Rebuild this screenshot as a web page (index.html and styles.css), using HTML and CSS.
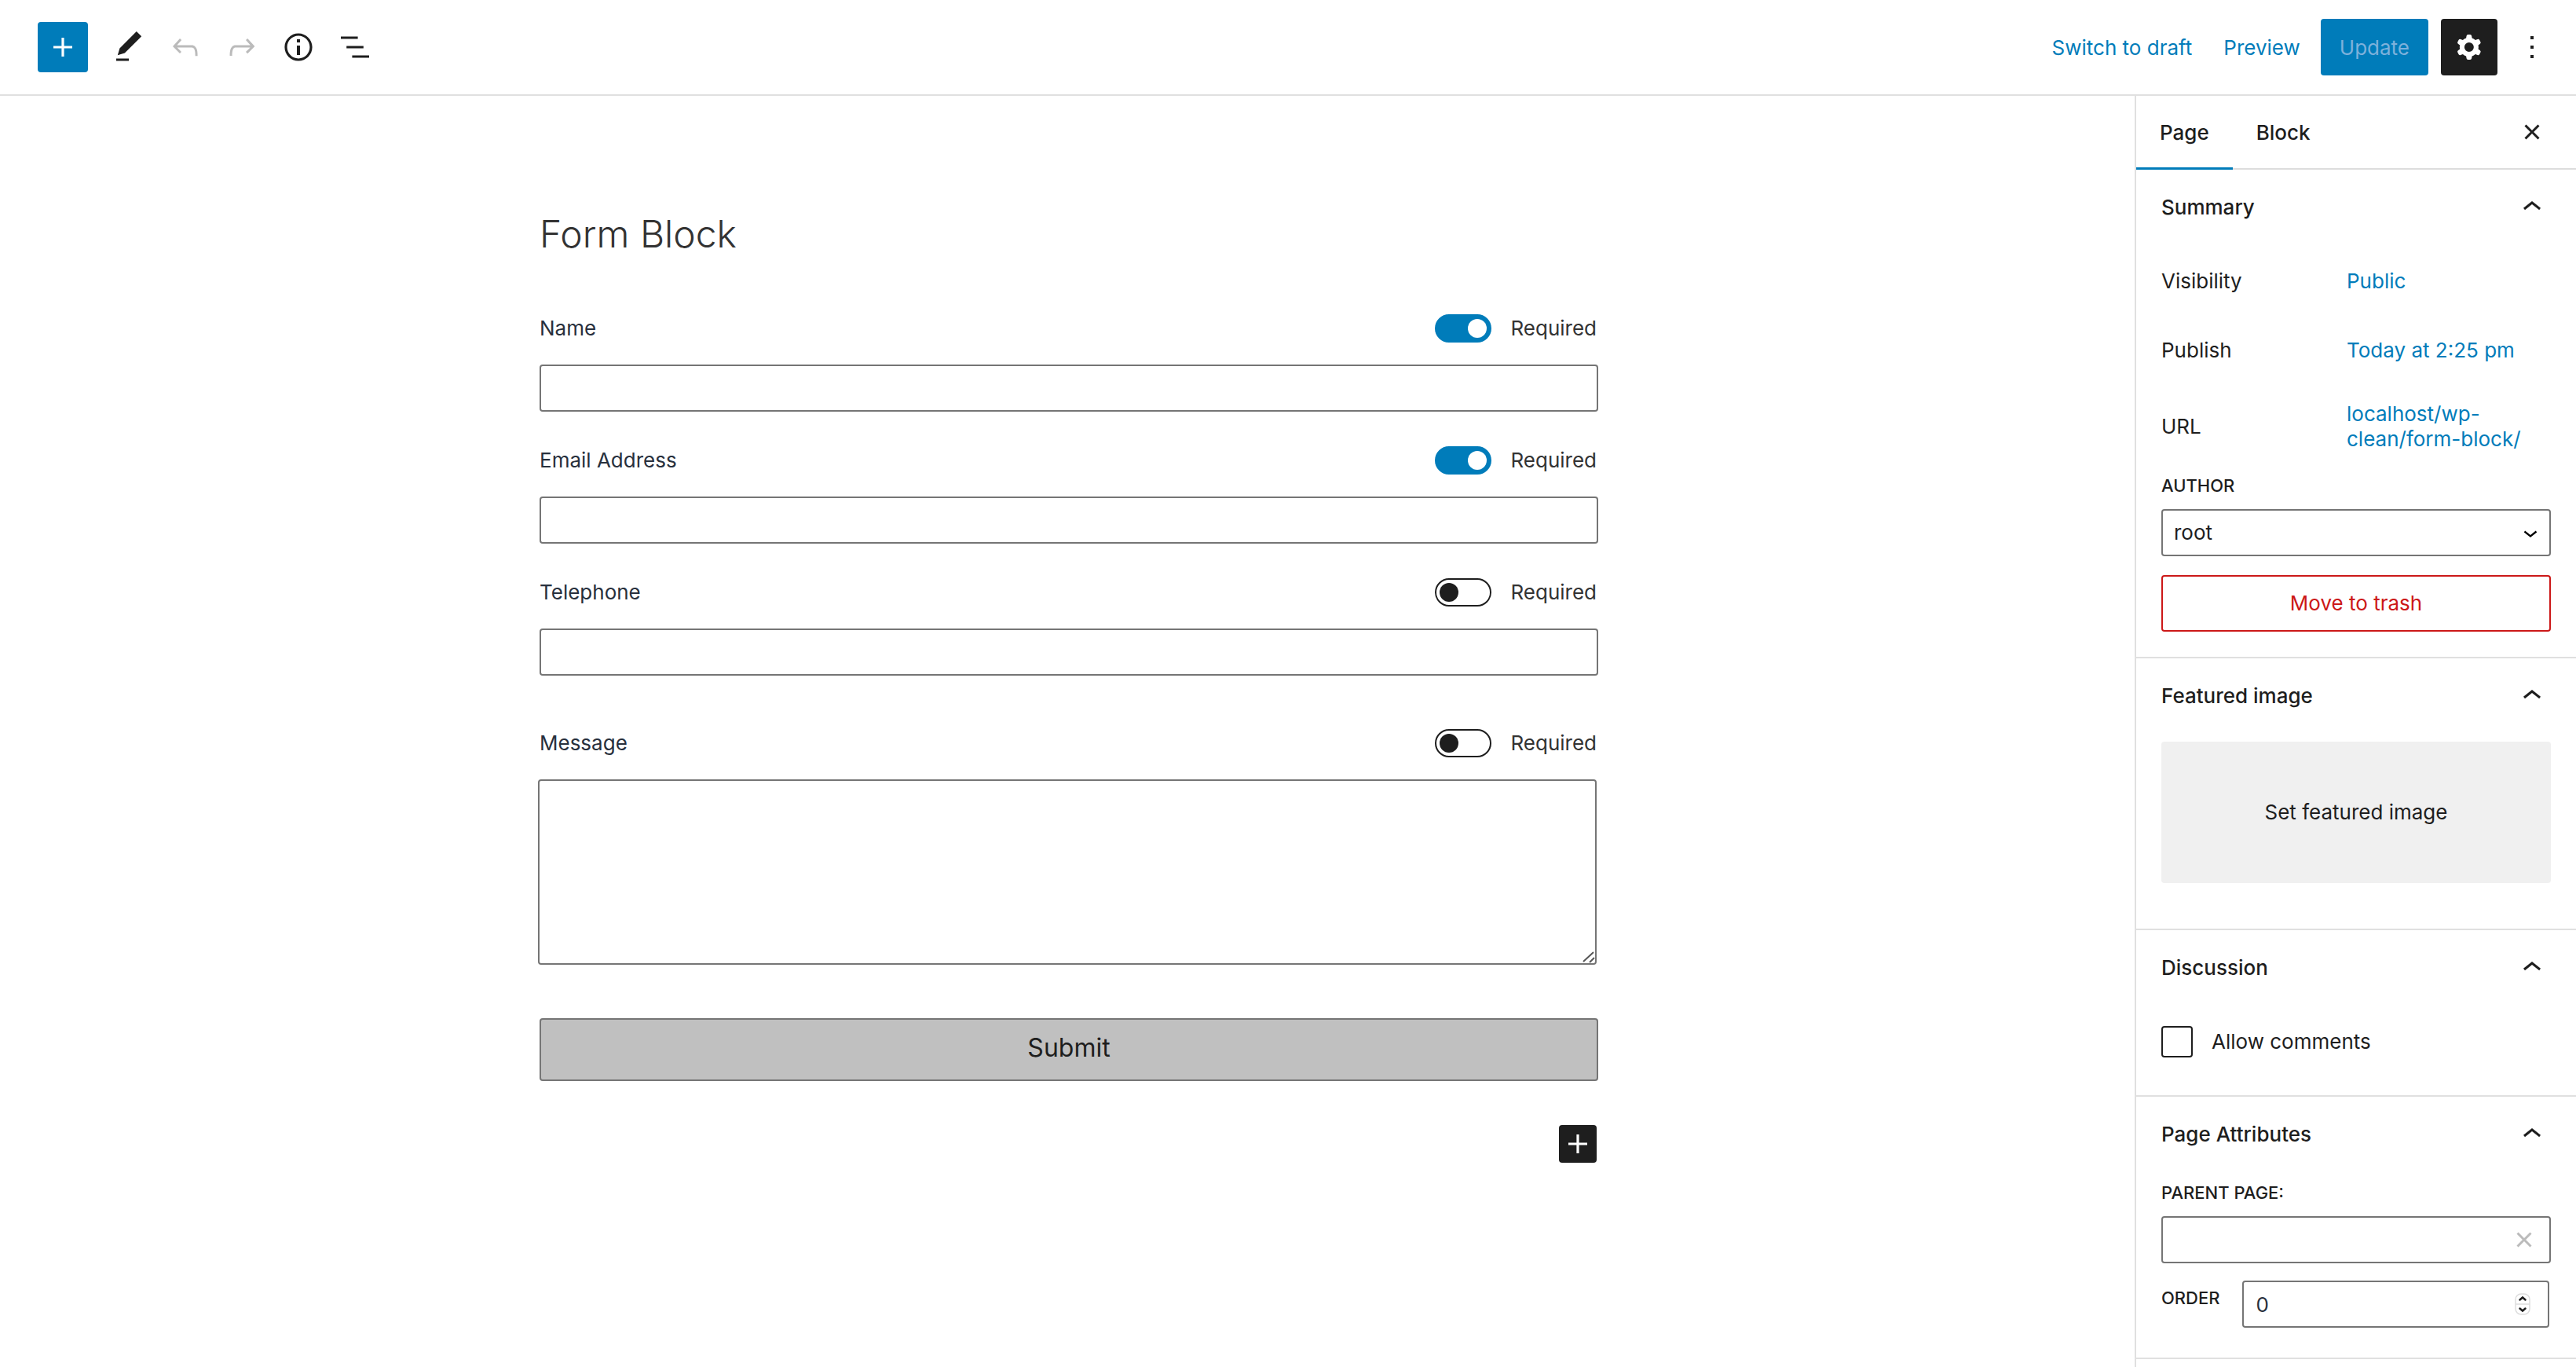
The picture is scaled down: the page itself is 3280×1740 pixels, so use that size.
FILE: index.html
```html
<!DOCTYPE html>
<html lang="en">
<head>
<meta charset="utf-8">
<title>Form Block</title>
<link rel="stylesheet" href="styles.css">
</head>
<body>
<header class="topbar">
  <div class="tools">
    <button class="inserter" type="button" aria-label="Toggle block inserter"><svg class="icon" viewBox="0 0 24 24"><path d="M18 11.2h-5.2V6h-1.6v5.2H6v1.6h5.2V18h1.6v-5.2H18z"/></svg></button>
    <button class="tool" type="button" aria-label="Tools"><svg class="icon" viewBox="0 0 24 24"><path d="M20.1 5.1L16.9 2 6.2 12.7l-1.3 4.4 4.5-1.3L20.1 5.1zM4 20.8h8v-1.5H4v1.5z"/></svg></button>
    <button class="tool" type="button" aria-label="Undo" disabled><svg class="icon" viewBox="0 0 24 24"><path d="M18.3 11.7c-.6-.6-1.4-.9-2.3-.9H6.7l2.9-3.3-1.1-1-4.5 5L8.5 16l1-1-2.7-2.7H16c.5 0 .9.2 1.3.5 1 1 1 3.4 1 4.5v.3h1.5v-.2c0-1.5 0-4.3-1.5-5.7z"/></svg></button>
    <button class="tool" type="button" aria-label="Redo" disabled><svg class="icon" viewBox="0 0 24 24"><path d="M15.6 6.5l-1.1 1 2.9 3.3H8c-.9 0-1.7.3-2.3.9-1.4 1.5-1.4 4.2-1.4 5.6v.2h1.5v-.3c0-1.1 0-3.5 1-4.5.3-.3.7-.5 1.3-.5h9.2L14.5 15l1.1 1.1 4.6-4.6-4.6-5z"/></svg></button>
    <button class="tool" type="button" aria-label="Details"><svg class="icon" viewBox="0 0 24 24"><path d="M12 3.2c-4.8 0-8.8 3.9-8.8 8.8 0 4.8 3.9 8.8 8.8 8.8 4.8 0 8.8-3.9 8.8-8.8 0-4.8-4-8.8-8.8-8.8zm0 16c-4 0-7.2-3.3-7.2-7.2C4.8 8 8 4.8 12 4.8s7.2 3.3 7.2 7.2c0 4-3.2 7.2-7.2 7.2zM11 17h2v-6h-2v6zm0-8h2V7h-2v2z"/></svg></button>
    <button class="tool" type="button" aria-label="List view"><svg class="icon" viewBox="0 0 24 24"><path d="M13.8 5.2H3v1.5h10.8V5.2zm-3.6 12v1.5H21v-1.5H10.2zm7.2-6H6.6v1.5h10.8v-1.5z"/></svg></button>
  </div>
  <div class="actions">
    <button class="text-button" type="button">Switch to draft</button>
    <button class="text-button" type="button">Preview</button>
    <button class="update" type="button" disabled>Update</button>
    <button class="settings" type="button" aria-label="Settings"><svg class="icon" viewBox="0 0 24 24"><path fill-rule="evenodd" d="M10.289 4.836A1 1 0 0111.275 4h1.306a1 1 0 01.987.836l.244 1.466c.787.26 1.503.679 2.108 1.218l1.393-.522a1 1 0 011.216.437l.653 1.13a1 1 0 01-.23 1.273l-1.148.944a6.025 6.025 0 010 2.435l1.149.946a1 1 0 01.23 1.272l-.653 1.13a1 1 0 01-1.216.437l-1.394-.522c-.605.54-1.32.958-2.108 1.218l-.244 1.466a1 1 0 01-.987.836h-1.306a1 1 0 01-.986-.836l-.244-1.466a5.995 5.995 0 01-2.108-1.218l-1.394.522a1 1 0 01-1.217-.436l-.653-1.131a1 1 0 01.23-1.272l1.149-.946a6.026 6.026 0 010-2.435l-1.148-.944a1 1 0 01-.23-1.272l.653-1.131a1 1 0 011.217-.437l1.393.522a5.994 5.994 0 012.108-1.218l.244-1.466zM14.929 12a3 3 0 11-6 0 3 3 0 016 0z"/></svg></button>
    <button class="tool" type="button" aria-label="Options"><svg class="icon" viewBox="0 0 24 24"><path d="M13 19h-2v-2h2v2zm0-6h-2v-2h2v2zm0-6h-2V5h2v2z"/></svg></button>
  </div>
</header>

<div class="workspace">
  <main class="canvas">
    <div class="post">
      <h1 class="title">Form Block</h1>
      <form class="form">
        <div class="field">
          <div class="field-head">
            <label for="name">Name</label>
            <label class="required"><input class="toggle" type="checkbox" checked>Required</label>
          </div>
          <input class="box" id="name" type="text">
        </div>
        <div class="field">
          <div class="field-head">
            <label for="email">Email Address</label>
            <label class="required"><input class="toggle" type="checkbox" checked>Required</label>
          </div>
          <input class="box" id="email" type="email">
        </div>
        <div class="field">
          <div class="field-head">
            <label for="tel">Telephone</label>
            <label class="required"><input class="toggle" type="checkbox">Required</label>
          </div>
          <input class="box" id="tel" type="tel">
        </div>
        <div class="message">
          <div class="field-head">
            <label for="message">Message</label>
            <label class="required"><input class="toggle" type="checkbox">Required</label>
          </div>
          <div class="control">
            <textarea class="box area" id="message"></textarea>
            <svg class="grip" viewBox="0 0 16 16"><path d="M1 14L14 2M9 15l6-6"/></svg>
          </div>
        </div>
        <button class="submit" type="button">Submit</button>
      </form>
      <button class="appender" type="button" aria-label="Add block"><svg class="icon" viewBox="0 0 24 24"><path d="M18 11.2h-5.2V6h-1.6v5.2H6v1.6h5.2V18h1.6v-5.2H18z"/></svg></button>
    </div>
  </main>

  <aside class="sidebar">
    <div class="tabs">
      <button class="tab active" type="button">Page</button>
      <button class="tab" type="button">Block</button>
      <button class="tool close" type="button" aria-label="Close settings"><svg class="icon" viewBox="0 0 24 24"><path d="M12 13.06l3.712 3.713 1.061-1.06L13.061 12l3.712-3.712-1.06-1.06L12 10.938 8.288 7.227l-1.061 1.06L10.939 12l-3.712 3.712 1.06 1.061L12 13.061z"/></svg></button>
    </div>

    <section class="panel">
      <h2 class="panel-title"><button class="panel-toggle" type="button">Summary<svg class="icon" viewBox="0 0 24 24"><path d="M6.5 12.4L12 8l5.5 4.4-.9 1.2L12 10l-4.5 3.6-1-1.2z"/></svg></button></h2>
      <div class="panel-body summary">
        <div class="row"><span>Visibility</span><a href="#">Public</a></div>
        <div class="row"><span>Publish</span><a href="#">Today at 2:25 pm</a></div>
        <div class="row url"><span>URL</span><a href="#">localhost/wp-<br>clean/form-block/</a></div>
        <label class="caps" for="author">Author</label>
        <div class="control">
          <select class="box select" id="author"><option>root</option></select>
          <svg class="select-arrow" viewBox="0 0 24 24"><path d="M17.5 11.6L12 16l-5.5-4.4.9-1.2L12 14l4.5-3.6 1 1.2z"/></svg>
        </div>
        <button class="trash" type="button">Move to trash</button>
      </div>
    </section>

    <section class="panel">
      <h2 class="panel-title"><button class="panel-toggle" type="button">Featured image<svg class="icon" viewBox="0 0 24 24"><path d="M6.5 12.4L12 8l5.5 4.4-.9 1.2L12 10l-4.5 3.6-1-1.2z"/></svg></button></h2>
      <div class="panel-body featured">
        <button class="set-image" type="button">Set featured image</button>
      </div>
    </section>

    <section class="panel">
      <h2 class="panel-title"><button class="panel-toggle" type="button">Discussion<svg class="icon" viewBox="0 0 24 24"><path d="M6.5 12.4L12 8l5.5 4.4-.9 1.2L12 10l-4.5 3.6-1-1.2z"/></svg></button></h2>
      <div class="panel-body discussion">
        <label class="check"><input class="checkbox" type="checkbox">Allow comments</label>
      </div>
    </section>

    <section class="panel">
      <h2 class="panel-title"><button class="panel-toggle" type="button">Page Attributes<svg class="icon" viewBox="0 0 24 24"><path d="M6.5 12.4L12 8l5.5 4.4-.9 1.2L12 10l-4.5 3.6-1-1.2z"/></svg></button></h2>
      <div class="panel-body attributes">
        <label class="caps" for="parent">Parent page:</label>
        <div class="control">
          <input class="box" id="parent" type="text">
          <button class="clear" type="button" aria-label="Clear parent page" disabled><svg class="icon" viewBox="0 0 24 24"><path d="M12 13.06l3.712 3.713 1.061-1.06L13.061 12l3.712-3.712-1.06-1.06L12 10.938 8.288 7.227l-1.061 1.06L10.939 12l-3.712 3.712 1.06 1.061L12 13.061z"/></svg></button>
        </div>
        <div class="order">
          <label class="caps" for="order">Order</label>
          <div class="control">
            <input class="box number" id="order" type="number" value="0">
            <svg class="stepper" viewBox="0 0 20 28"><rect class="stepper-body" x="1" y="1" width="18" height="26" rx="7"/><path class="stepper-rule" d="M1 14h18"/><path class="stepper-arrows" d="M6.500 8.500l3.500-3 3.500 3M6.500 19.500l3.500 3 3.500-3"/></svg>
          </div>
        </div>
      </div>
    </section>
  </aside>
</div>
</body>
</html>
```
FILE: styles.css
```css
*,
*::before,
*::after {
  box-sizing: border-box;
}

body {
  margin: 0;
  min-height: 100vh;
  display: flex;
  flex-direction: column;
  background: #fff;
  color: #1e1e1e;
  font: 400 26px/32px Inter, "Liberation Sans", sans-serif;
}

button,
input,
select,
textarea {
  margin: 0;
  font: inherit;
  color: inherit;
}

button {
  padding: 0;
  border: 0;
  background: none;
  display: flex;
  align-items: center;
  justify-content: center;
}

a,
.text-button {
  color: #007cba;
  text-decoration: none;
}

.icon {
  width: 48px;
  height: 48px;
  fill: currentColor;
  flex: none;
}

/* Top bar */
.topbar {
  display: flex;
  justify-content: space-between;
  align-items: center;
  height: 122px;
  padding: 0 20px 0 48px;
  border-bottom: 2px solid #e0e0e0;
}

.tools,
.actions {
  display: flex;
  align-items: center;
}

.inserter {
  width: 64px;
  height: 64px;
  margin-right: 16px;
  border-radius: 4px;
  background: #007cba;
  color: #fff;
}

.tool {
  width: 72px;
  height: 72px;
}

.tool:disabled,
.clear:disabled {
  color: #bbb;
}

.text-button {
  height: 72px;
  padding-top: 2px;
  margin-left: 40px;
}

.update {
  height: 72px;
  padding: 2px 24px 0;
  margin: 0 16px 0 26px;
  border-radius: 4px;
  background: #007cba;
  color: #7db1db;
}

.settings {
  width: 72px;
  height: 72px;
  margin-right: 8px;
  border-radius: 4px;
  background: #1e1e1e;
  color: #fff;
}

/* Editor */
.workspace {
  flex: 1;
  display: flex;
}

.canvas {
  flex: 1;
  padding: 144px 30px 144px 32px;
}

.post {
  max-width: 1350px;
  margin: 0 auto;
  display: flex;
  flex-direction: column;
}

.title {
  margin: 0 0 70px 2px;
  color: #333;
  font-size: 48px;
  line-height: 64px;
  font-weight: 300;
}

.form {
  display: flex;
  flex-direction: column;
}

.field {
  margin: 0 0 44px 2px;
}

.field-head {
  display: flex;
  justify-content: space-between;
  align-items: center;
  height: 36px;
  margin-bottom: 28px;
  padding-right: 2px;
  color: #28303d;
}

.required {
  display: flex;
  align-items: center;
  gap: 24px;
  color: #333;
}

.box {
  display: block;
  width: 100%;
  height: 60px;
  padding: 0 16px;
  border: 2px solid #757575;
  border-radius: 4px;
  background: #fff;
}

.toggle {
  appearance: none;
  display: flex;
  align-items: center;
  width: 72px;
  height: 36px;
  padding: 0 4px;
  border: 2px solid #1e1e1e;
  border-radius: 18px;
  background: #fff;
}

.toggle::before {
  content: "";
  width: 24px;
  height: 24px;
  border-radius: 50%;
  background: #1e1e1e;
}

.toggle:checked {
  justify-content: flex-end;
  border-color: #007cba;
  background: #007cba;
}

.toggle:checked::before {
  background: #fff;
}

.message {
  margin: 24px 0 68px;
  padding-right: 2px;
}

.message .field-head {
  padding: 0 0 0 2px;
}

.control {
  position: relative;
}

.area {
  height: 236px;
  padding: 12px 16px;
  resize: none;
}

.grip {
  position: absolute;
  right: 2px;
  bottom: 2px;
  width: 16px;
  height: 16px;
  fill: none;
  stroke: #555;
  stroke-width: 2;
  pointer-events: none;
}

.submit {
  height: 80px;
  margin-left: 2px;
  padding-bottom: 4px;
  border: 2px solid #757575;
  border-radius: 4px;
  background: #c0c0c0;
  font-size: 32px;
}

.appender {
  align-self: flex-end;
  width: 48px;
  height: 48px;
  margin: 56px 2px 0 0;
  border-radius: 4px;
  background: #1e1e1e;
  color: #fff;
}

/* Settings sidebar */
.sidebar {
  flex: none;
  width: 562px;
  border-left: 2px solid #e0e0e0;
}

.tabs {
  display: flex;
  height: 94px;
  padding-right: 20px;
  border-bottom: 2px solid #ddd;
}

.tab {
  height: 94px;
  padding: 2px 30px 0;
  border-bottom: 3px solid transparent;
  font-weight: 500;
}

.tab.active {
  border-bottom-color: #007cba;
}

.close {
  margin: 10px 0 0 auto;
}

.panel {
  border-bottom: 2px solid #e0e0e0;
}

.panel-title {
  margin: 0;
  font-size: 26px;
  font-weight: 500;
}

.panel-toggle {
  width: 100%;
  height: 96px;
  padding: 0 32px;
  justify-content: space-between;
}

.panel-body {
  padding: 10px 32px 32px;
}

.summary,
.attributes {
  display: flex;
  flex-direction: column;
}

.row {
  display: grid;
  grid-template-columns: 236px 1fr;
  align-items: center;
  height: 72px;
  margin-bottom: 16px;
}

.url {
  height: 90px;
}

.caps {
  margin-bottom: 16px;
  font-size: 22px;
  line-height: 28px;
  font-weight: 500;
  text-transform: uppercase;
}

.select {
  appearance: none;
  padding: 0 14px;
}

.select-arrow {
  position: absolute;
  right: 8px;
  top: 12px;
  width: 36px;
  height: 36px;
  pointer-events: none;
}

.trash {
  height: 72px;
  margin-top: 24px;
  border: 2px solid #cc1818;
  border-radius: 4px;
  color: #cc1818;
}

.featured {
  padding-bottom: 58px;
}

.set-image {
  width: 100%;
  height: 180px;
  border-radius: 4px;
  background: #f0f0f0;
}

.discussion {
  padding: 26px 32px 48px;
}

.check {
  display: flex;
  align-items: center;
  gap: 24px;
}

.checkbox {
  appearance: none;
  width: 40px;
  height: 40px;
  border: 2px solid #1e1e1e;
  border-radius: 4px;
}

.attributes {
  padding: 12px 32px 38px;
}

.clear {
  position: absolute;
  right: 10px;
  top: 6px;
}

.order {
  display: flex;
  gap: 28px;
  margin-top: 22px;
  padding-right: 2px;
}

.order .caps {
  margin-top: 8px;
}

.order .control {
  flex: 1;
}

.number {
  appearance: textfield;
  color: #28303d;
}

.number::-webkit-inner-spin-button {
  display: none;
}

.stepper {
  position: absolute;
  right: 24px;
  top: 16px;
  width: 20px;
  height: 28px;
  fill: none;
  pointer-events: none;
}

.stepper-body,
.stepper-rule {
  stroke: #ddd;
  stroke-width: 1.5;
}

.stepper-arrows {
  stroke: #1e1e1e;
  stroke-width: 2.5;
  stroke-linecap: round;
}
```
